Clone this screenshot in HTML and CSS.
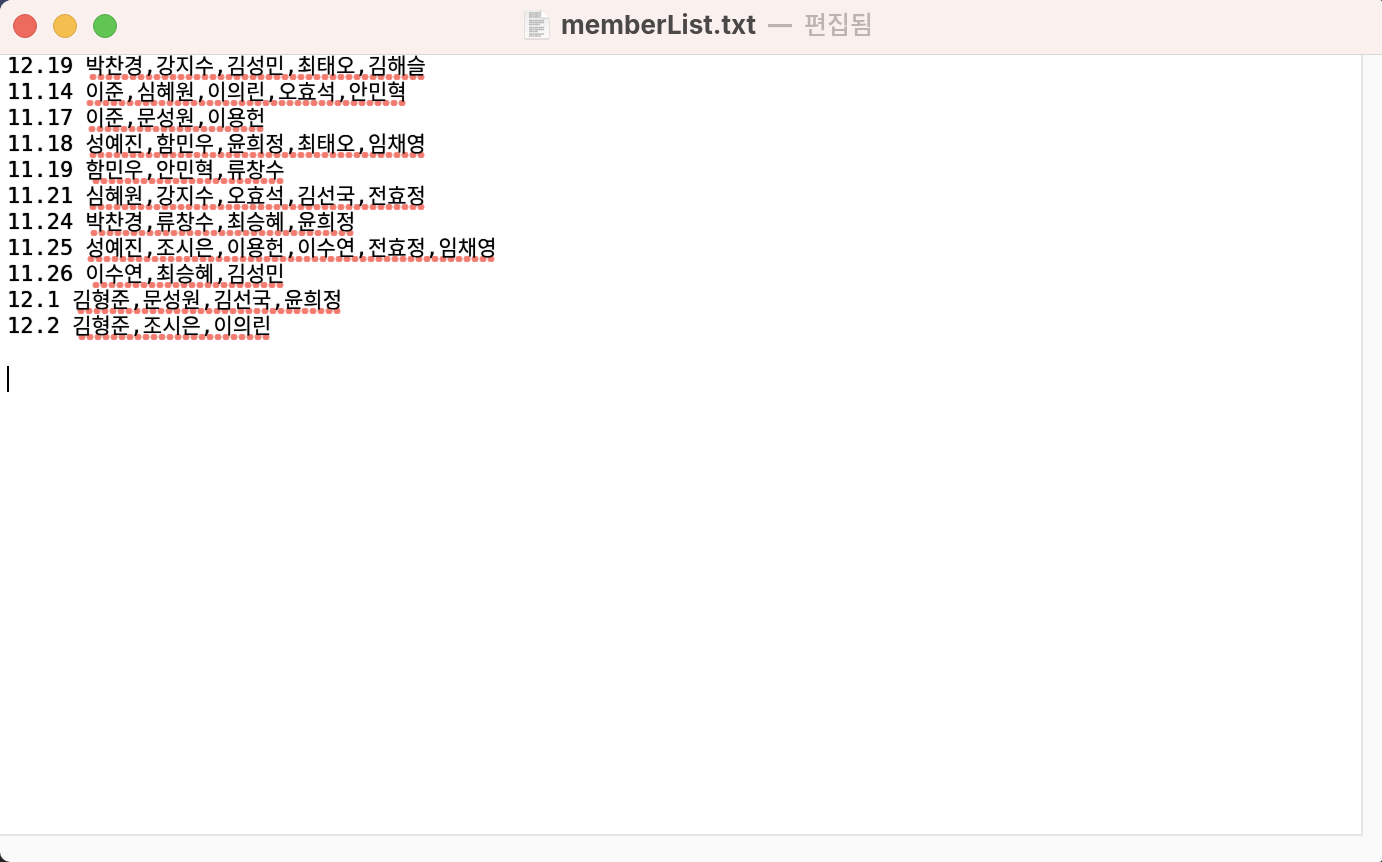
FILE: index.html
```html
<!DOCTYPE html>
<html lang="ko">
<head>
<meta charset="utf-8">
<meta name="viewport" content="width=device-width, initial-scale=1">
<title>memberList.txt</title>
<link rel="stylesheet" href="styles.css">
</head>
<body>
<div class="window">
  <header class="titlebar">
    <div class="controls">
      <button class="control close" type="button" aria-label="닫기"></button>
      <button class="control minimize" type="button" aria-label="최소화"></button>
      <button class="control zoom" type="button" aria-label="확대"></button>
    </div>
    <div class="title">
      <svg class="doc-icon" viewBox="0 0 28 32" aria-hidden="true">
        <defs>
          <linearGradient id="paper" x1="0" y1="0" x2="0" y2="1">
            <stop offset="0" stop-color="#ececeb"/>
            <stop offset="1" stop-color="#fbfbfa"/>
          </linearGradient>
        </defs>
        <path d="M3 1.600H18.500L26.400 10V29q0 1.600-1.600 1.600H3Q1.400 30.600 1.400 29V3.200Q1.400 1.600 3 1.600Z" fill="#cfc8c6"/>
        <path d="M3.200 1H18L26 9V28.200q0 1.400-1.400 1.400H3.200q-1.400 0-1.400-1.400V2.400Q1.800 1 3.200 1Z" fill="url(#paper)"/>
        <g fill="none" stroke="#a9a9a9" stroke-opacity=".8" stroke-width="1.500" stroke-dasharray="3 .3 2 .3 4 .3">
          <path d="M6 4H17M6 6H17M6 8H17M6 11.500H21.500M6 13.500H21M6 15.500H17M6 18.500H21.500M6 20.500H21M6 22.500H15M6 25H21M6 27H18"/>
        </g>
        <path d="M18 1V7.500Q18 9 19.500 9H26Z" fill="#fff"/>
        <path d="M17.800 1V7.600Q17.800 9.200 19.400 9.200H26" fill="none" stroke="#c4c4c4" stroke-width=".9"/>
      </svg>
      <h1 class="filename">memberList.txt</h1>
      <span class="dash">—</span>
      <span class="status">편집됨</span>
    </div>
  </header>
  <main class="body">
    <div class="editor" role="textbox" aria-multiline="true" aria-label="memberList.txt" contenteditable="true" spellcheck="false">
      <div class="line"><span class="date">12.19 </span><span class="names">박찬경,강지수,김성민,최태오,김해슬</span></div>
      <div class="line"><span class="date">11.14 </span><span class="names">이준,심혜원,이의린,오효석,안민혁</span></div>
      <div class="line"><span class="date">11.17 </span><span class="names">이준,문성원,이용헌</span></div>
      <div class="line"><span class="date">11.18 </span><span class="names">성예진,함민우,윤희정,최태오,임채영</span></div>
      <div class="line"><span class="date">11.19 </span><span class="names">함민우,안민혁,류창수</span></div>
      <div class="line"><span class="date">11.21 </span><span class="names">심혜원,강지수,오효석,김선국,전효정</span></div>
      <div class="line"><span class="date">11.24 </span><span class="names">박찬경,류창수,최승혜,윤희정</span></div>
      <div class="line"><span class="date">11.25 </span><span class="names">성예진,조시은,이용헌,이수연,전효정,임채영</span></div>
      <div class="line"><span class="date">11.26 </span><span class="names">이수연,최승혜,김성민</span></div>
      <div class="line"><span class="date">12.1 </span><span class="names">김형준,문성원,김선국,윤희정</span></div>
      <div class="line"><span class="date">12.2 </span><span class="names">김형준,조시은,이의린</span></div>
      <div class="line"></div>
      <div class="line"><span class="caret"></span></div>
    </div>
  </main>
</div>
</body>
</html>
```

FILE: styles.css
```css
* {
  box-sizing: border-box;
}

body {
  margin: 0;
  background: linear-gradient(#3a4464 50%, #222224 50%);
}

.window {
  display: flex;
  flex-direction: column;
  min-height: 100vh;
  overflow: hidden;
  border-radius: 12px 3px 3px 10px;
  background: #fafafa;
}

.titlebar {
  position: relative;
  z-index: 1;
  display: grid;
  grid-template-columns: 1fr auto 1fr;
  align-items: center;
  height: 54px;
  padding: 0 13px;
  background: #faf1ef;
  box-shadow: 0 1px #d8d6d7;
}

.controls {
  display: flex;
  gap: 16px;
  padding-bottom: 2px;
}

.control {
  width: 24px;
  height: 24px;
  padding: 0;
  border: 1px solid;
  border-radius: 50%;
}

.close {
  background: #ed6a5e;
  border-color: #d5584e;
}

.minimize {
  background: #f5bf4f;
  border-color: #d9a441;
}

.zoom {
  background: #61c554;
  border-color: #4fa943;
}

.title {
  display: flex;
  align-items: center;
  padding-left: 14px;
  padding-bottom: 4px;
  font-family: Inter, "Noto Sans CJK KR", sans-serif;
  line-height: 32px;
}

.doc-icon {
  width: 28px;
  height: 32px;
  margin-right: 10px;
}

.filename {
  margin: 0;
  font-size: 26px;
  font-weight: 700;
  color: #4b4948;
}

.dash {
  margin: 0 12px;
  font-size: 24px;
  font-weight: 800;
  color: #bcb3b2;
}

.status {
  font-size: 25px;
  font-weight: 500;
  color: #bcb3b2;
}

.body {
  display: flex;
  flex: 1;
  padding: 0 19px 26px 0;
}

.editor {
  flex: 1;
  padding-left: 7px;
  border-right: 2px solid #e6e6e6;
  border-bottom: 2px solid #e6e6e6;
  outline: none;
  background: #fff;
  color: #000;
  caret-color: transparent;
  font-family: "DejaVu Sans Mono", "Noto Sans CJK KR", monospace;
  font-size: 22px;
  line-height: 24px;
}

.line {
  display: flex;
  height: 26px;
  white-space: pre;
}

.date {
  text-shadow: 0 0 1px #000;
}

.names {
  position: relative;
  margin-left: -1px;
  font-size: 21px;
  text-shadow: 0 0 1px #0008;
}

/* Spelling marks: whole dots only, flush with the end of the text */
.names::after {
  content: "";
  position: absolute;
  right: 1px;
  bottom: 0;
  width: round(down, 100%, 8px);
  height: 6px;
  background: radial-gradient(circle at center, #f27a6e 0 2px, #f27a6edd 3px, #f27a6e00 4px) 0 0 / 8px 6px repeat-x;
  mix-blend-mode: multiply;
}

.caret {
  width: 2px;
  background: #000;
}
```
